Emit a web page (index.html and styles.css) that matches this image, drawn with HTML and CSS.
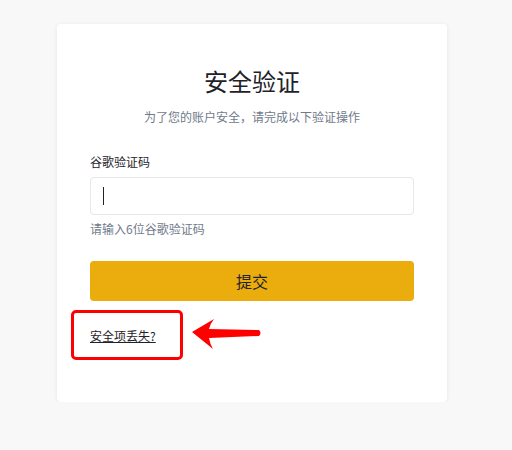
FILE: index.html
```html
<!DOCTYPE html>
<html lang="zh-CN">
<head>
  <meta charset="UTF-8" />
  <meta name="viewport" content="width=device-width, initial-scale=1.0"/>
  <title>安全验证</title>
  <link rel="stylesheet" href="styles.css">
</head>
<body>
  <div class="card">
    <h1>安全验证</h1>
    <p class="subtitle">为了您的账户安全，请完成以下验证操作</p>

    <label class="label">谷歌验证码</label>
    <div class="field"><span class="caret"></span></div>
    <p class="hint">请输入6位谷歌验证码</p>

    <button class="submit">提交</button>

    <div class="lost-row">
      <div class="highlight">
        <a href="#" class="lost">安全项丢失?</a>
      </div>
      <svg class="arrow" width="74" height="38" viewBox="0 0 74 38">
        <path d="M2 17 L24 4 Q20 9 19 14 L69 15 Q72 18 69 21 L19 23 Q20 29 23 34 Z" fill="#ff0000"/>
      </svg>
    </div>
  </div>
</body>
</html>
```

FILE: styles.css
```css
body {
  margin: 0;
  padding: 24px 0 0 57px;
  background-color: #f8f8f8;
  font-family: "Noto Sans CJK SC", "Noto Sans", sans-serif;
  color: #1e2329;
}

.card {
  width: 390px;
  box-sizing: border-box;
  background: #fff;
  border-radius: 4px;
  box-shadow: 0 1px 4px rgba(0, 0, 0, 0.08);
  padding: 41px 33px 42px;
}

h1 {
  margin: 0;
  font-size: 24px;
  line-height: 32px;
  font-weight: 400;
  text-align: center;
  color: #1e2329;
}

.subtitle {
  margin: 11px 0 0;
  font-size: 12px;
  line-height: 18px;
  text-align: center;
  color: #707a8a;
}

.label {
  display: block;
  margin-top: 27px;
  font-size: 12px;
  line-height: 18px;
  color: #1e2329;
}

.field {
  margin-top: 6px;
  height: 38px;
  box-sizing: border-box;
  border: 1px solid #e6e8ea;
  border-radius: 4px;
  display: flex;
  align-items: center;
  padding-left: 12px;
}

.caret {
  width: 1px;
  height: 18px;
  background: #1e2329;
}

.hint {
  margin: 5px 0 0;
  font-size: 12px;
  line-height: 18px;
  color: #707a8a;
}

.submit {
  display: block;
  width: 100%;
  height: 40px;
  margin-top: 23px;
  border: none;
  border-radius: 4px;
  background-color: #ebac0e;
  color: #1e2329;
  font-family: inherit;
  font-size: 16px;
}

.lost-row {
  display: flex;
  align-items: center;
  margin-top: 9px;
}

.highlight {
  margin-left: -19px;
  width: 112px;
  height: 50px;
  box-sizing: border-box;
  border: 3px solid #ff0000;
  border-radius: 5px;
  padding-left: 16px;
  display: flex;
  align-items: center;
}

.lost {
  font-size: 12px;
  color: #1e2329;
  text-decoration: underline;
}

.arrow {
  margin-left: 7px;
  margin-top: -2px;
}
```
